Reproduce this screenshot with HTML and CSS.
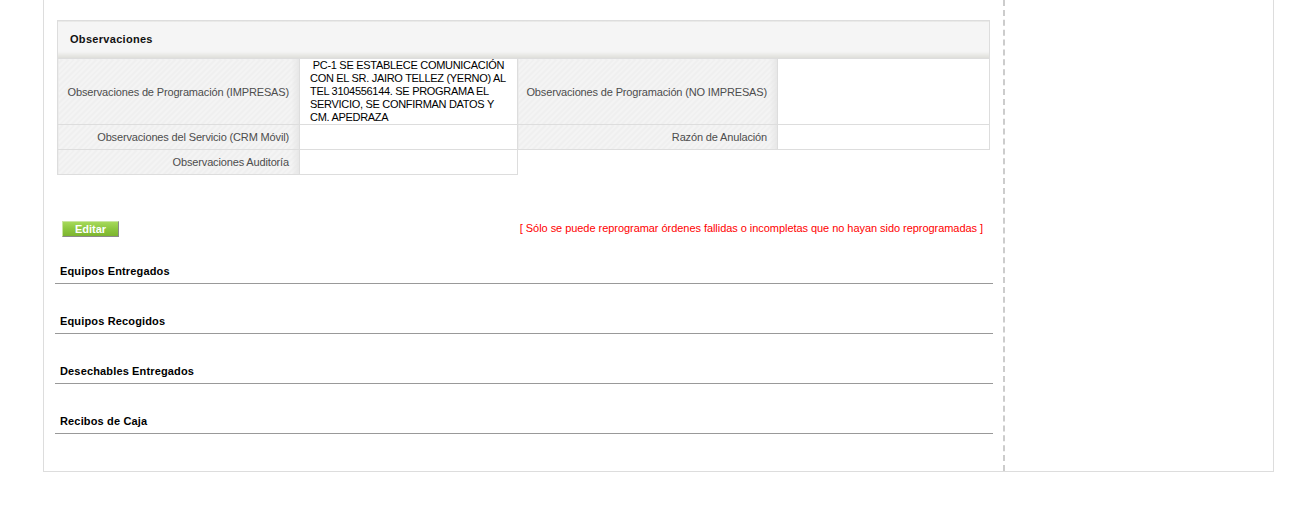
FILE: index.html
```html
<!DOCTYPE html>
<html lang="es">
<head>
    <meta charset="UTF-8">
    <title>Orden de Servicio</title>
    <link rel="stylesheet" href="styles.css">
</head>
<body>

<div class="page">
    <div class="main">
        <table class="obs-table">
            <colgroup>
                <col class="col-label1">
                <col class="col-value1">
                <col class="col-label2">
                <col class="col-value2">
            </colgroup>
            <tr>
                <th colspan="4" class="obs-head">Observaciones</th>
            </tr>
            <tr>
                <td class="label">Observaciones de Programación (IMPRESAS)</td>
                <td class="value">&nbsp;PC-1 SE ESTABLECE COMUNICACIÓN<br>CON EL SR. JAIRO TELLEZ (YERNO) AL<br>TEL 3104556144. SE PROGRAMA EL<br>SERVICIO, SE CONFIRMAN DATOS Y<br>CM. APEDRAZA</td>
                <td class="label">Observaciones de Programación (NO IMPRESAS)</td>
                <td class="value"></td>
            </tr>
            <tr class="short">
                <td class="label">Observaciones del Servicio (CRM Móvil)</td>
                <td class="value"></td>
                <td class="label">Razón de Anulación</td>
                <td class="value"></td>
            </tr>
            <tr class="short">
                <td class="label">Observaciones Auditoría</td>
                <td class="value"></td>
            </tr>
        </table>

        <div class="actions">
            <button class="btn-green">Editar</button>
            <span class="warning">[ Sólo se puede reprogramar órdenes fallidas o incompletas que no hayan sido reprogramadas ]</span>
        </div>

        <div class="sections">
            <div class="section">Equipos Entregados</div>
            <div class="section">Equipos Recogidos</div>
            <div class="section">Desechables Entregados</div>
            <div class="section">Recibos de Caja</div>
        </div>
    </div>
    <div class="sidebar"></div>
</div>

</body>
</html>
```

FILE: styles.css
```css
body {
    margin: 0;
    background: #fff;
    font-family: "Liberation Sans", Arial, sans-serif;
    font-size: 11px;
    color: #000;
}
.page {
    display: flex;
    width: 1231px;
    margin-left: 43px;
    border: 1px solid #ddd;
    border-top: 0;
    box-sizing: border-box;
}
.main {
    width: 959px;
    padding: 20px 10px 37px 11px;
    box-sizing: border-box;
}
.sidebar {
    flex: 1;
    border-left: 2px dashed #ccc;
}

.obs-table {
    width: 933px;
    margin-left: 2px;
    border-collapse: collapse;
    table-layout: fixed;
}
.col-label1 { width: 242px; }
.col-value1 { width: 218px; }
.col-label2 { width: 260px; }
.col-value2 { width: 212px; }
.obs-table th,
.obs-table td {
    border: 1px solid #ddd;
    padding: 0;
}
.obs-head {
    height: 35px;
    padding: 0 0 2px 12px !important;
    text-align: left;
    font-weight: bold;
    letter-spacing: 0.3px;
    color: #111;
    background: linear-gradient(to bottom, #f5f5f5 0, #f5f5f5 30px, #ebebe8 33px, #dcdcd8 37px);
}
.label {
    text-align: right;
    padding-right: 10px !important;
    letter-spacing: -0.15px;
    color: #4d4d4d;
    background:
        linear-gradient(to right, rgba(0,0,0,0) 0, rgba(0,0,0,0) calc(100% - 8px), #e6e6e6 100%),
        repeating-linear-gradient(135deg, #f4f4f4 0, #f4f4f4 2px, #efefef 2px, #efefef 4px);
}
.value {
    padding-left: 10px !important;
    line-height: 13px;
    letter-spacing: -0.3px;
    vertical-align: top;
    background: #fff;
}
.short td {
    height: 24px;
}

.actions {
    display: flex;
    justify-content: space-between;
    align-items: center;
    margin-top: 46px;
    padding: 0 10px 0 7px;
}
.btn-green {
    width: 57px;
    height: 16px;
    padding: 0;
    font-family: "Liberation Sans", Arial, sans-serif;
    font-size: 11px;
    font-weight: bold;
    line-height: 13px;
    color: #fff;
    background: linear-gradient(to bottom, #a6d95a 0, #8cc63f 50%, #7db52f 100%);
    border: 1px solid;
    border-color: #c9e6a0 #8a8a8a #8a8a8a #c9e6a0;
}
.warning {
    color: #f00;
    line-height: 13px;
    margin-bottom: 2px;
    letter-spacing: -0.05px;
}

.sections {
    margin-top: 27px;
}
.section {
    padding: 0 5px 5px;
    line-height: 14px;
    font-weight: bold;
    letter-spacing: 0.15px;
    border-bottom: 1px solid #999;
}
.section + .section {
    margin-top: 30px;
}
```
